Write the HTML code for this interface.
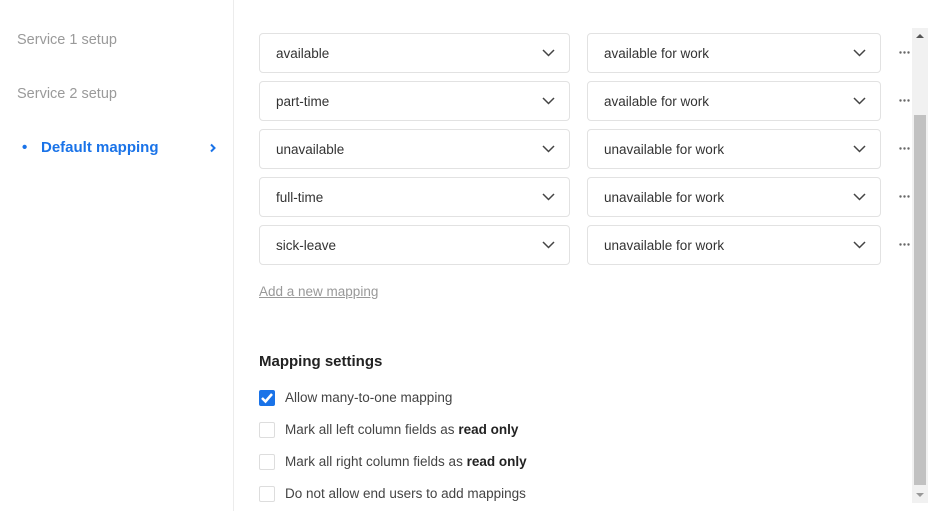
<!DOCTYPE html>
<html><head><style>
*{margin:0;padding:0;box-sizing:border-box}
body{width:942px;height:511px;overflow:hidden;background:#fff;font-family:"Liberation Sans",sans-serif;position:relative;color:#333}
.side{position:absolute;left:0;top:0;width:234px;height:511px;border-right:1px solid #ececec}
.nav{position:absolute;left:17px;font-size:14.5px;color:#9a9a9a}
.sel{position:absolute;height:40px;border:1px solid #e2e2e2;border-radius:4px;font-size:13.5px;color:#333;padding-left:16px;line-height:39px}
.sel svg{position:absolute;right:14px;top:15px}
.dots{position:absolute;left:899px}
.cb{position:absolute;left:259px;width:16px;height:16px;border:1px solid #ddd;border-radius:2px}
.lab{position:absolute;left:285px;font-size:13.5px;color:#444}
.lab b{color:#222}
</style></head><body>
<div class="side">
<div class="nav" style="top:32px">Service 1 setup</div>
<div class="nav" style="top:86px">Service 2 setup</div>
<div style="position:absolute;left:22px;top:139px;font-size:15px;color:#1a73e8;font-weight:bold">•</div>
<div style="position:absolute;left:41px;top:139px;font-size:15px;color:#1a73e8;font-weight:bold">Default mapping</div>
<svg style="position:absolute;left:209px;top:143px" width="8" height="10"><path d="M2 1.5l3.5 3.5-3.5 3.5" stroke="#1a73e8" stroke-width="2" fill="none"/></svg>
</div>
<svg width="0" height="0" style="position:absolute"><defs><g id="ch"><path d="M1 1l5.5 5.5L12 1" stroke="#444" stroke-width="1.5" fill="none"/></g><g id="d"><circle cx="1.5" cy="1.5" r="1.2" fill="#666"/><circle cx="5.5" cy="1.5" r="1.2" fill="#666"/><circle cx="9.5" cy="1.5" r="1.2" fill="#666"/></g></defs></svg>
<div class="sel" style="left:259px;top:33px;width:311px">available<svg width="13" height="8"><use href="#ch"/></svg></div>
<div class="sel" style="left:587px;top:33px;width:294px">available for work<svg width="13" height="8"><use href="#ch"/></svg></div>
<svg class="dots" style="top:51px" width="12" height="3"><use href="#d"/></svg>
<div class="sel" style="left:259px;top:81px;width:311px">part-time<svg width="13" height="8"><use href="#ch"/></svg></div>
<div class="sel" style="left:587px;top:81px;width:294px">available for work<svg width="13" height="8"><use href="#ch"/></svg></div>
<svg class="dots" style="top:99px" width="12" height="3"><use href="#d"/></svg>
<div class="sel" style="left:259px;top:129px;width:311px">unavailable<svg width="13" height="8"><use href="#ch"/></svg></div>
<div class="sel" style="left:587px;top:129px;width:294px">unavailable for work<svg width="13" height="8"><use href="#ch"/></svg></div>
<svg class="dots" style="top:147px" width="12" height="3"><use href="#d"/></svg>
<div class="sel" style="left:259px;top:177px;width:311px">full-time<svg width="13" height="8"><use href="#ch"/></svg></div>
<div class="sel" style="left:587px;top:177px;width:294px">unavailable for work<svg width="13" height="8"><use href="#ch"/></svg></div>
<svg class="dots" style="top:195px" width="12" height="3"><use href="#d"/></svg>
<div class="sel" style="left:259px;top:225px;width:311px">sick-leave<svg width="13" height="8"><use href="#ch"/></svg></div>
<div class="sel" style="left:587px;top:225px;width:294px">unavailable for work<svg width="13" height="8"><use href="#ch"/></svg></div>
<svg class="dots" style="top:243px" width="12" height="3"><use href="#d"/></svg>
<div style="position:absolute;left:259px;top:284px;font-size:13.5px;color:#999;text-decoration:underline">Add a new mapping</div>
<div style="position:absolute;left:259px;top:353px;font-size:15px;color:#222;font-weight:bold">Mapping settings</div>
<div class="cb" style="top:390px;background:#1a73e8;border-color:#1a73e8"><svg width="14" height="14" style="position:absolute;left:0;top:0"><path d="M2 7l3.5 3.5L12 3" stroke="#fff" stroke-width="2.5" fill="none"/></svg></div>
<div class="lab" style="top:390px">Allow many-to-one mapping</div>
<div class="cb" style="top:422px"></div>
<div class="lab" style="top:422px">Mark all left column fields as <b>read only</b></div>
<div class="cb" style="top:454px"></div>
<div class="lab" style="top:454px">Mark all right column fields as <b>read only</b></div>
<div class="cb" style="top:486px"></div>
<div class="lab" style="top:486px">Do not allow end users to add mappings</div>
<div style="position:absolute;left:912px;top:28px;width:16px;height:475px;background:#f1f1f1"></div>
<div style="position:absolute;left:914px;top:115px;width:12px;height:370px;background:#c1c1c1"></div>
<svg style="position:absolute;left:915px;top:33px" width="10" height="6"><path d="M1 5L5 1 9 5z" fill="#555"/></svg>
<svg style="position:absolute;left:915px;top:492px" width="10" height="6"><path d="M1 1L5 5 9 1z" fill="#999"/></svg>
</body></html>
